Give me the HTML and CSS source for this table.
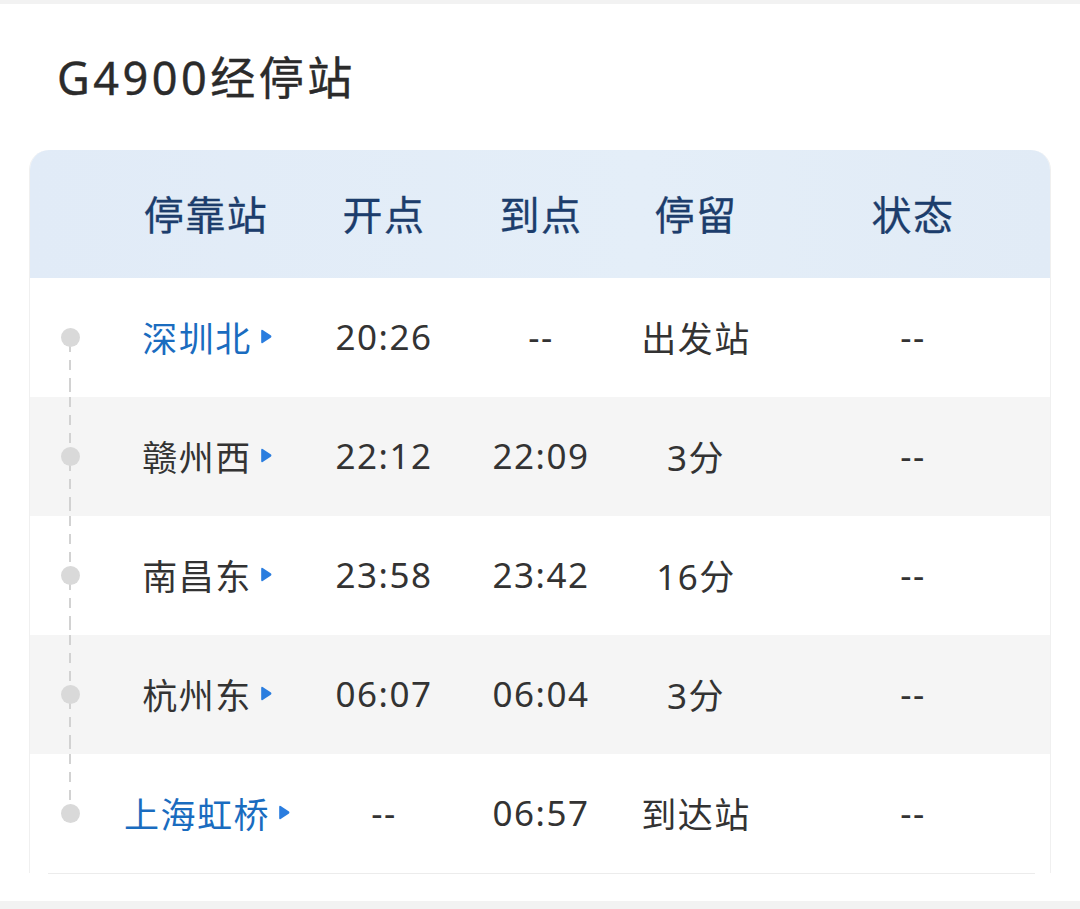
FILE: index.html
```html
<!DOCTYPE html>
<html lang="zh-CN">
<head>
<meta charset="utf-8">
<title>G4900经停站</title>
<link rel="stylesheet" href="styles.css">
</head>
<body>
<div class="topbar"></div>
<h1 class="title">G4900经停站</h1>
<div class="card">
  <div class="row head">
    <div class="tl"></div>
    <div class="cell">停靠站</div>
    <div class="cell">开点</div>
    <div class="cell">到点</div>
    <div class="cell">停留</div>
    <div class="cell">状态</div>
  </div>
  <div class="row">
    <div class="tl first"><span class="dot"></span></div>
    <div class="cell station blue">深圳北<svg class="arrow" viewBox="0 0 11 14"><path d="M1 1.8 Q1 0.2 2.4 0.9 L10.2 6 Q11 7 10.2 8 L2.4 13.1 Q1 13.8 1 12.2 Z"/></svg></div>
    <div class="cell">20:26</div>
    <div class="cell">--</div>
    <div class="cell">出发站</div>
    <div class="cell">--</div>
  </div>
  <div class="row alt">
    <div class="tl"><span class="dot"></span></div>
    <div class="cell station">赣州西<svg class="arrow" viewBox="0 0 11 14"><path d="M1 1.8 Q1 0.2 2.4 0.9 L10.2 6 Q11 7 10.2 8 L2.4 13.1 Q1 13.8 1 12.2 Z"/></svg></div>
    <div class="cell">22:12</div>
    <div class="cell">22:09</div>
    <div class="cell">3分</div>
    <div class="cell">--</div>
  </div>
  <div class="row">
    <div class="tl"><span class="dot"></span></div>
    <div class="cell station">南昌东<svg class="arrow" viewBox="0 0 11 14"><path d="M1 1.8 Q1 0.2 2.4 0.9 L10.2 6 Q11 7 10.2 8 L2.4 13.1 Q1 13.8 1 12.2 Z"/></svg></div>
    <div class="cell">23:58</div>
    <div class="cell">23:42</div>
    <div class="cell">16分</div>
    <div class="cell">--</div>
  </div>
  <div class="row alt">
    <div class="tl"><span class="dot"></span></div>
    <div class="cell station">杭州东<svg class="arrow" viewBox="0 0 11 14"><path d="M1 1.8 Q1 0.2 2.4 0.9 L10.2 6 Q11 7 10.2 8 L2.4 13.1 Q1 13.8 1 12.2 Z"/></svg></div>
    <div class="cell">06:07</div>
    <div class="cell">06:04</div>
    <div class="cell">3分</div>
    <div class="cell">--</div>
  </div>
  <div class="row">
    <div class="tl last"><span class="dot"></span></div>
    <div class="cell station blue">上海虹桥<svg class="arrow" viewBox="0 0 11 14"><path d="M1 1.8 Q1 0.2 2.4 0.9 L10.2 6 Q11 7 10.2 8 L2.4 13.1 Q1 13.8 1 12.2 Z"/></svg></div>
    <div class="cell">--</div>
    <div class="cell">06:57</div>
    <div class="cell">到达站</div>
    <div class="cell">--</div>
  </div>
</div>
<div class="sep"></div>
<div class="bottombar"></div>
</body>
</html>
```

FILE: styles.css
```css
* { box-sizing: border-box; }
html, body {
  margin: 0;
  padding: 0;
  background: #ffffff;
  font-family: "Noto Sans", "Noto Sans CJK SC", sans-serif;
  color: #333333;
}
.topbar {
  height: 4px;
  background: #f2f2f2;
}
.title {
  margin: 46px 0 0 57px;
  height: 56px;
  line-height: 56px;
  font-size: 45px;
  font-weight: 400;
  letter-spacing: 3.5px;
  color: #2b2b2b;
  -webkit-text-stroke: 0.4px #2b2b2b;
}
.card {
  margin: 44px 0 0 29px;
  width: 1022px;
  border-left: 1px solid #f0f0f0;
  border-right: 1px solid #f0f0f0;
  border-radius: 20px 20px 0 0;
  overflow: hidden;
}
.row {
  display: grid;
  grid-template-columns: 80px 192px 164px 150px 160px 274px;
  height: 119px;
  align-items: center;
  font-size: 35px;
  letter-spacing: 1.5px;
  color: #333333;
}
.row.alt { background: #f5f5f5; }
.row.head {
  height: 128px;
  background: linear-gradient(90deg, #e1ebf7 0%, #e4eef8 60%, #e1ebf6 100%);
  color: #1c3d6c;
  font-size: 40px;
  -webkit-text-stroke: 0.3px #1c3d6c;
}
.cell {
  text-align: center;
  display: flex;
  justify-content: center;
  align-items: center;
  white-space: nowrap;
  padding-bottom: 3px;
}
.station { padding-left: 2px; }
.station.blue { color: #1a6cbf; }
.arrow {
  width: 12px;
  height: 15px;
  margin-left: 8px;
  fill: #2a7ddf;
  flex: none;
}
.tl {
  position: relative;
  height: 100%;
  display: flex;
  justify-content: center;
  align-items: center;
}
.tl::before, .tl::after {
  content: "";
  position: absolute;
  left: 39px;
  width: 2px;
  background: repeating-linear-gradient(to bottom, #d2d2d2 0 10px, transparent 10px 18px);
}
.tl::before { top: 0; height: 50%; }
.tl::after { bottom: 0; height: 50%; background: repeating-linear-gradient(to bottom, #d2d2d2 0 14px, transparent 14px 22px, #d2d2d2 22px 32px, transparent 32px 40px); }
.head .tl::before, .head .tl::after,
.tl.first::before, .tl.last::after { display: none; }
.dot {
  position: relative;
  z-index: 1;
  width: 19px;
  height: 19px;
  border-radius: 50%;
  background: #d9d9d9;
}
.sep {
  margin-left: 48px;
  width: 987px;
  height: 1px;
  background: #ececec;
}
.bottombar {
  margin-top: 27px;
  height: 9px;
  background: #f2f2f2;
}
```
